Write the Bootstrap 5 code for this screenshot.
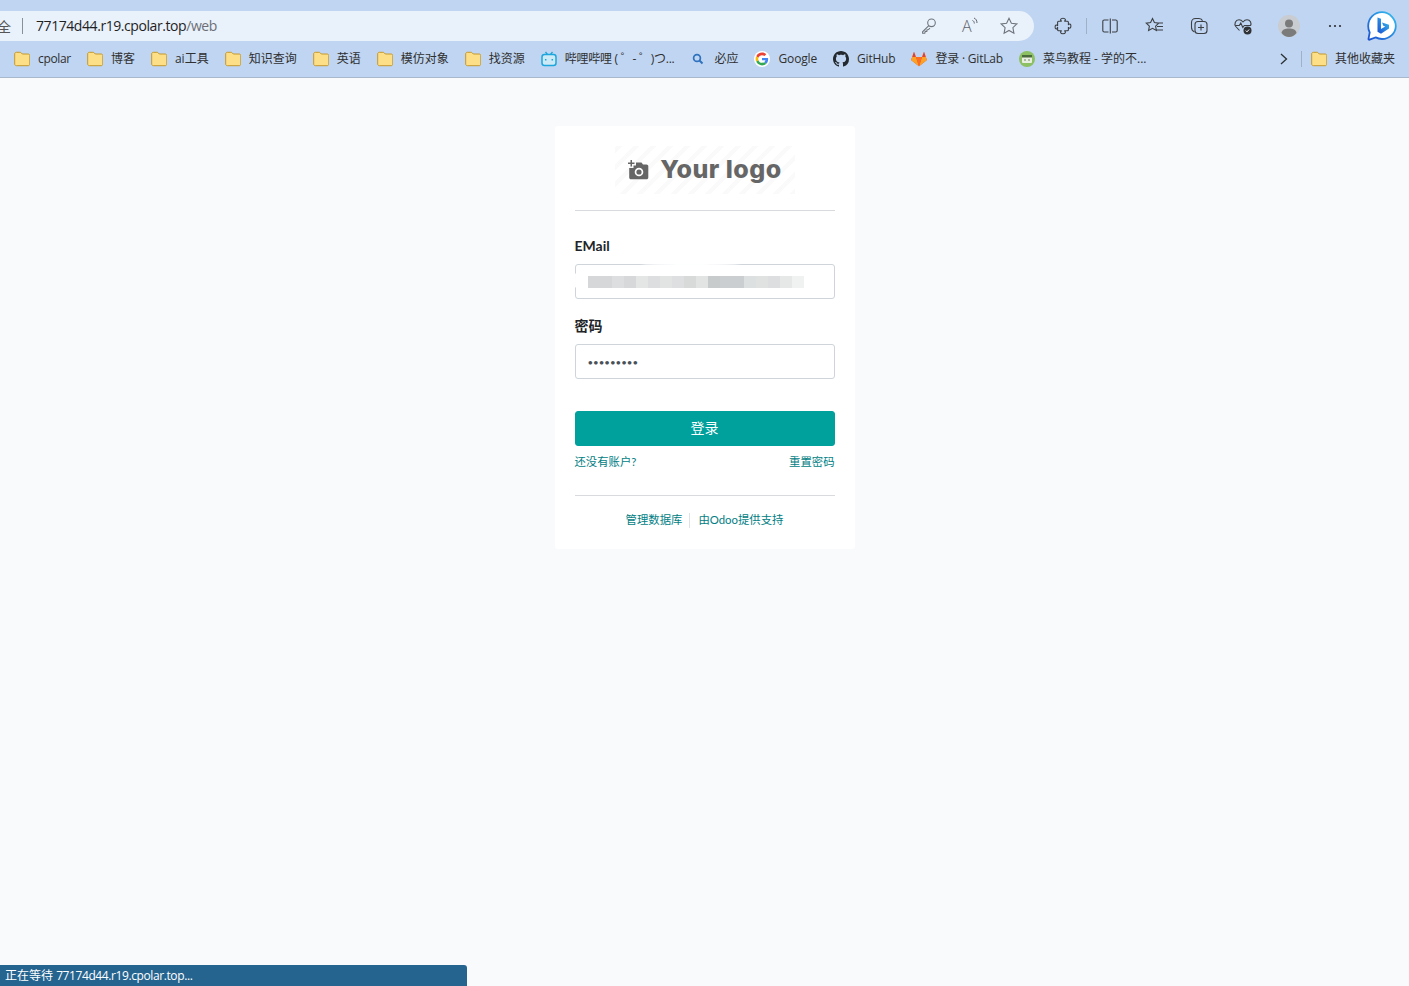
<!DOCTYPE html>
<html lang="zh-CN">

<head>
  <meta charset="UTF-8" />
  <meta name="viewport" content="width=device-width, initial-scale=1" />
  <title>Odoo</title>
  <link href="https://cdn.jsdelivr.net/npm/bootstrap@5.3.0/dist/css/bootstrap.min.css" rel="stylesheet" />
  <style>
    body {
      background: #f9fafb;
      min-height: 100vh;
      font-family: "Lato", "Noto Sans CJK SC", sans-serif;
      font-size: 14px;
      color: #212529;
    }

    .browser-bar {
      background: #bfd5f1;
      height: 78px;
      border-bottom: 1px solid #a9b8cb;
      font-family: "Open Sans", "Noto Sans CJK SC", sans-serif;
      overflow: hidden;
    }

    .tool-row {
      height: 30px;
      margin-top: 11px;
    }

    .address-box {
      width: 1034px;
      background: #e9f1fb;
      border-radius: 0 15px 15px 0;
      overflow: hidden;
      color: #1f1f1f;
      font-size: 14px;
    }

    .secure-text {
      margin-left: -3px;
      width: 14px;
      color: #555;
    }

    .address-sep {
      width: 1px;
      height: 16px;
      background: #8a8f96;
      margin: 0 13px 0 11px;
    }

    .url-path {
      color: #6b6f75;
    }

    .url-text {
      letter-spacing: -0.43px;
      margin-top: -1px;
    }

    .inner-tools {
      margin-right: 15px;
      gap: 20px;
    }

    .icon-slot {
      width: 20px;
      height: 20px;
    }

    .tool-slot {
      width: 45px;
      height: 30px;
    }

    .tool-narrow {
      width: 44px;
    }

    .tool-wide {
      width: 46px;
    }

    .first-tool {
      margin-left: 6px;
    }

    .avatar-tool {
      margin-left: 1px;
    }

    .bing-logo {
      margin-left: 2px;
    }

    .tool-sep {
      width: 1px;
      height: 16px;
      background: #9fb1c7;
      margin-left: 1px;
    }

    .mini-svg {
      fill: none;
      stroke: #3c3f44;
      stroke-width: 1.1;
    }

    .key-svg {
      stroke: #70757c;
    }

    .read-a {
      font-family: "Open Sans", sans-serif;
      font-size: 16px;
      font-weight: 300;
      fill: #60656c;
    }

    .bookmark-row {
      height: 36px;
      padding-left: 14px;
      font-size: 12px;
      color: #303030;
    }

    .bookmark {
      gap: 8px;
      margin-right: 16px;
      white-space: nowrap;
      color: #303030;
      text-decoration: none;
    }

    .bookmark svg {
      width: 16px;
      height: 16px;
      flex: none;
    }

    .tight-1 {
      letter-spacing: -0.33px;
    }

    .tight-2 {
      letter-spacing: -0.2px;
    }

    .tight-3 {
      letter-spacing: -0.25px;
    }

    .tight-4 {
      letter-spacing: -0.15px;
    }

    .bookmark-tail {
      margin-left: auto;
      padding-right: 14px;
    }

    .tail-sep {
      width: 1px;
      height: 16px;
      background: #9fb1c7;
      margin: 0 9px 0 12px;
    }

    .login-card {
      width: 300px;
      margin: 48px auto 0;
      padding: 20px;
      background: #fff;
      border: 0;
      border-radius: 3px;
    }

    .logo-box {
      width: 180px;
      height: 48px;
      margin: 0 auto;
      gap: 11px;
      color: #666;
      background: repeating-linear-gradient(-45deg, #fafafa 0 4px, #fff 4px 12px);
    }

    .logo-text {
      font-family: "Inter", sans-serif;
      font-size: 25px;
      font-weight: 800;
      letter-spacing: 0.5px;
      line-height: 1;
      margin-bottom: 2px;
      white-space: nowrap;
    }

    .logo-rule {
      margin: 16px 0 24px;
      border-top: 1px solid #d8dadd;
      opacity: 1;
    }

    .login-label {
      font-weight: 700;
      margin-bottom: 8px;
      line-height: 21px;
      display: block;
    }

    .login-input {
      height: 35px;
      padding: 6px 12px;
      font-size: 14px;
      line-height: 21px;
      border: 1px solid #ced4da;
      border-radius: 3px;
      color: #495057;
    }

    .password-input {
      font-size: 9.7px;
    }

    .email-wrap {
      margin-bottom: 16px;
    }

    .email-smear {
      position: absolute;
      left: -7px;
      top: 0;
      width: 245px;
      height: 33px;
      background: rgba(255, 255, 255, 0.96);
      border-radius: 45%;
    }

    .email-pixels {
      position: absolute;
      left: 13px;
      top: 12px;
      width: 216px;
      height: 12px;
      background: linear-gradient(90deg,
          #d5d7d8 0 24px, #dcdedf 24px 36px, #d6d8d9 36px 48px, #e4e6e6 48px 60px,
          #dcdedf 60px 72px, #e2e4e4 72px 84px, #dddfe0 84px 96px, #d8dada 96px 108px,
          #e2e4e4 108px 120px, #c8cbcb 120px 132px, #cbced1 132px 156px, #dde0e0 156px 168px,
          #e0e2e2 168px 180px, #dcdedf 180px 192px, #e6e7e7 192px 204px, #f0f2f2 204px 216px);
    }

    .login-submit {
      height: 35px;
      margin-top: 32px;
      padding: 5px 12px 7px;
      font-size: 14px;
      line-height: 21px;
      color: #fff;
      background: #00a09d;
      border: 1px solid #00a09d;
      border-radius: 3px;
    }

    .login-links {
      margin-top: 7px;
      font-size: 11.375px;
      line-height: 18px;
    }

    .teal-link {
      color: #017e84;
      text-decoration: none;
    }

    .foot-rule {
      margin: 24px 0 15px;
      border-top: 1px solid #d8dadd;
      opacity: 1;
    }

    .foot-links {
      font-size: 11.375px;
      line-height: 18px;
    }

    .foot-sep {
      width: 1px;
      height: 15px;
      background: #dee2e6;
      margin: 0 8px 0 7px;
    }

    .status-tip {
      position: fixed;
      left: 0;
      bottom: 0;
      width: 467px;
      height: 21px;
      padding-left: 5px;
      background: #25648f;
      color: #fff;
      font-family: "Open Sans", "Noto Sans CJK SC", sans-serif;
      font-size: 12px;
      line-height: 21px;
      border-top-right-radius: 3px;
    }

    .status-url {
      letter-spacing: -0.4px;
    }
  </style>
</head>

<body>
  <svg width="0" height="0" class="position-absolute">
    <symbol id="folder" viewBox="0 0 16 16">
      <path d="M.7 3c0-1.100.7-1.700 1.600-1.700h3.600c.6 0 1 .2 1.400.6l1 1.100h5.800c1 0 1.700.7 1.700 1.700v8.300c0 1-.7 1.700-1.700 1.700H2.400c-1 0-1.700-.7-1.700-1.700z"
        fill="#fddf88" stroke="#c4982c" stroke-width="1" />
    </symbol>
  </svg>

  <header class="browser-bar">
    <div class="tool-row d-flex align-items-center">
      <div class="address-box h-100 d-flex align-items-center">
        <span class="secure-text">全</span>
        <span class="address-sep"></span>
        <span class="url-text">77174d44.r19.cpolar.top<span class="url-path">/web</span></span>
        <div class="inner-tools ms-auto d-flex align-items-center">
          <svg class="icon-slot mini-svg key-svg" viewBox="0 0 20 20">
            <circle cx="12.500" cy="6.800" r="3.800" />
            <path d="M9.800 9.600 3.600 15.800v1.400h2.200l.4-1.800h1.600l.3-1.700 1.500-.2 1.300-1.500" />
          </svg>
          <svg class="icon-slot" viewBox="0 0 20 20">
            <text x="3" y="16" class="read-a">A</text>
            <path d="M13.500 4.500c1.200.4 1.800 1.500 1.800 3M15 2c1.800.6 3 2.600 3 5" fill="none" stroke="#60656c" stroke-width="1" />
          </svg>
          <svg class="icon-slot mini-svg key-svg" viewBox="0 0 20 20">
            <path d="m10 2.200 2.400 5 5.500.7-4 3.800 1 5.500-4.900-2.700-4.900 2.700 1-5.500-4-3.800 5.500-.7z" />
          </svg>
        </div>
      </div>

      <div class="tool-slot first-tool d-flex align-items-center justify-content-center">
        <svg class="icon-slot mini-svg" viewBox="0 0 20 20">
          <path d="M8.700 5.200C6.800 4.400 7.300 2.200 10 2.200s3.200 2.200 1.300 3h3.100c.6 0 1 .4 1 1v2.900c.8-1.800 2.500-1.400 2.500 1s-1.700 2.800-2.500 1v2.700c0 .6-.4 1-1 1h-3.100c1.900.8 1.400 3-1.300 3s-3.200-2.200-1.300-3H5.600c-.6 0-1-.4-1-1v-2.700C3.800 13.900 2.100 13.500 2.100 11.100s1.700-2.800 2.500-1V6.200c0-.6.4-1 1-1z" />
        </svg>
      </div>
      <span class="tool-sep"></span>
      <div class="tool-slot d-flex align-items-center justify-content-center">
        <svg class="icon-slot mini-svg" viewBox="0 0 20 20">
          <path d="M8.500 4H4.300C3.300 4 2.800 4.600 2.800 5.500v9c0 1 .6 1.500 1.500 1.500h4.200M12 4h3.700c1 0 1.500.6 1.500 1.500v9c0 1-.6 1.500-1.500 1.500H12M10.300 2.500v15" />
        </svg>
      </div>
      <div class="tool-slot d-flex align-items-center justify-content-center">
        <svg class="icon-slot mini-svg" viewBox="0 0 20 20">
          <path d="m7.500 2.500 1.900 4.100 4.300.5-3.100 3 .8 4.400-3.900-2.200-3.900 2.200.8-4.400-3.100-3 4.300-.5zM12.500 7h5.500M12 10.500h6M11.500 14h6.500" />
        </svg>
      </div>
      <div class="tool-slot tool-narrow d-flex align-items-center justify-content-center">
        <svg class="icon-slot mini-svg" viewBox="0 0 20 20">
          <path d="M5.500 16C3.500 15 2.500 13.500 2.500 11.500V6.500c0-2.500 1.600-4 4-4h3.500c1.600 0 3 .8 3.500 2.200" />
          <rect x="6" y="5.500" width="12" height="12" rx="3" />
          <path d="M12 8.500v6M9 11.500h6" />
        </svg>
      </div>
      <div class="tool-slot tool-narrow d-flex align-items-center justify-content-center">
        <svg class="icon-slot" viewBox="0 0 20 20">
          <path d="M6.500 14.500 2.800 10.500C.9 8.200 2.400 3.800 6 3.800c1.700 0 3 1 4 2.200 1-1.200 2.300-2.200 4-2.200 3.300 0 4.800 3.400 3.500 6" class="mini-svg" />
          <path d="M2.500 9.500h3.800l1.500-2.500 2 4.500 1.500-2h6.500" class="mini-svg" />
          <circle cx="14.500" cy="14.500" r="4" fill="#2f3237" />
          <path d="m12.800 14.600 1.200 1.200 2.100-2.300" fill="none" stroke="#fff" stroke-width="1" />
        </svg>
      </div>
      <div class="tool-slot tool-wide avatar-tool d-flex align-items-center justify-content-center">
        <svg width="22" height="22" viewBox="0 0 22 22">
          <circle cx="11" cy="11" r="11" fill="#c9ccd0" />
          <circle cx="11" cy="8.500" r="4" fill="#7b7b7b" />
          <path d="M3.500 18c.6-3.400 3.500-4.500 7.500-4.500s6.900 1.100 7.500 4.500c-2 2.500-4.600 4-7.500 4s-5.500-1.500-7.500-4z" fill="#7b7b7b" />
        </svg>
      </div>
      <div class="tool-slot tool-wide d-flex align-items-center justify-content-center">
        <svg width="14" height="4" viewBox="0 0 14 4">
          <circle cx="2" cy="2" r="1.100" fill="#2c2f33" />
          <circle cx="7" cy="2" r="1.100" fill="#2c2f33" />
          <circle cx="12" cy="2" r="1.100" fill="#2c2f33" />
        </svg>
      </div>
      <div class="tool-slot tool-wide d-flex align-items-center justify-content-center">
        <svg class="bing-logo" width="30" height="30" viewBox="0 0 30 30">
          <defs>
            <linearGradient id="bingFill" x1="0" y1="1" x2="1" y2="0">
              <stop offset="0" stop-color="#1b4fd0" />
              <stop offset="1" stop-color="#35c1f1" />
            </linearGradient>
          </defs>
          <path d="M15 1.200C7.300 1.200 1.200 7.300 1.200 15c0 2.300.5 4.500 1.500 6.400L1.500 27.800c-.1.700.4 1.100 1.100.9l6-2.300c1.900 1 4.100 1.600 6.400 1.600 7.700 0 13.800-6.100 13.800-13S22.700 1.200 15 1.200z"
            fill="#fff" stroke="url(#bingFill)" stroke-width="1.800" />
          <path d="M10.500 6.500l3.500 1.200v10.300l4.300-2.400-2-.9-1.300-3.300 7 2.400v3.700L14 22.800l-3.500-2z" fill="url(#bingFill)" />
        </svg>
      </div>
    </div>

    <nav class="bookmark-row d-flex align-items-center">
      <a class="bookmark d-flex align-items-center"><svg><use href="#folder" /></svg><span class="tight-1">cpolar</span></a>
      <a class="bookmark d-flex align-items-center"><svg><use href="#folder" /></svg><span>博客</span></a>
      <a class="bookmark d-flex align-items-center"><svg><use href="#folder" /></svg><span>ai工具</span></a>
      <a class="bookmark d-flex align-items-center"><svg><use href="#folder" /></svg><span>知识查询</span></a>
      <a class="bookmark d-flex align-items-center"><svg><use href="#folder" /></svg><span>英语</span></a>
      <a class="bookmark d-flex align-items-center"><svg><use href="#folder" /></svg><span>模仿对象</span></a>
      <a class="bookmark d-flex align-items-center"><svg><use href="#folder" /></svg><span>找资源</span></a>
      <a class="bookmark d-flex align-items-center">
        <svg viewBox="0 0 16 16">
          <path d="M4.500 1 6.500 3.500M11.500 1 9.500 3.500" stroke="#1ca6dc" stroke-width="1.300" fill="none" />
          <rect x="1" y="3.500" width="14" height="11" rx="2.500" fill="#cfeaf7" stroke="#1ca6dc" stroke-width="1.500" />
          <path d="M4.700 8v1.500M11.300 8v1.500" stroke="#1ca6dc" stroke-width="1.500" />
        </svg>
        <span class="tight-3">哔哩哔哩 ( ゜- ゜)つ...</span>
      </a>
      <a class="bookmark d-flex align-items-center">
        <svg viewBox="0 0 16 16">
          <circle cx="7" cy="7" r="3.400" fill="none" stroke="#2f72bd" stroke-width="1.700" />
          <path d="m9.500 9.500 3 3" stroke="#2f72bd" stroke-width="1.900" />
        </svg>
        <span>必应</span>
      </a>
      <a class="bookmark d-flex align-items-center">
        <svg viewBox="-6 -6 60 60">
          <circle cx="24" cy="24" r="30" fill="#fff" />
          <path fill="#EA4335" d="M24 9.500c3.540 0 6.710 1.220 9.210 3.600l6.850-6.850C35.900 2.380 30.470 0 24 0 14.620 0 6.510 5.380 2.560 13.220l7.980 6.190C12.430 13.720 17.740 9.500 24 9.500z" />
          <path fill="#4285F4" d="M46.980 24.550c0-1.570-.15-3.090-.38-4.550H24v9.020h12.940c-.58 2.960-2.260 5.480-4.780 7.180l7.730 6c4.510-4.180 7.090-10.360 7.090-17.650z" />
          <path fill="#FBBC05" d="M10.530 28.590c-.48-1.450-.76-2.990-.76-4.590s.27-3.140.76-4.590l-7.980-6.190C.92 16.460 0 20.120 0 24c0 3.880.92 7.540 2.560 10.780l7.970-6.190z" />
          <path fill="#34A853" d="M24 48c6.480 0 11.930-2.130 15.890-5.810l-7.730-6c-2.150 1.450-4.920 2.300-8.160 2.300-6.260 0-11.570-4.220-13.470-9.910l-7.980 6.190C6.510 42.620 14.620 48 24 48z" />
        </svg>
        <span class="tight-4">Google</span>
      </a>
      <a class="bookmark d-flex align-items-center">
        <svg viewBox="0 0 16 16">
          <path fill="#24292f" d="M8 0C3.580 0 0 3.580 0 8c0 3.540 2.290 6.530 5.470 7.590.4.070.55-.17.55-.38 0-.19-.01-.82-.01-1.490-2.010.37-2.530-.49-2.690-.94-.09-.23-.48-.94-.82-1.130-.28-.15-.68-.52-.01-.53.63-.01 1.080.58 1.230.82.72 1.210 1.870.87 2.330.66.070-.52.28-.87.51-1.070-1.780-.2-3.640-.89-3.640-3.950 0-.87.31-1.590.82-2.150-.08-.2-.36-1.020.08-2.120 0 0 .67-.21 2.200.82.64-.18 1.320-.27 2-.27.68 0 1.360.09 2 .27 1.530-1.040 2.200-.82 2.200-.82.44 1.100.16 1.920.08 2.120.51.56.82 1.270.82 2.150 0 3.070-1.870 3.750-3.650 3.950.29.25.54.73.54 1.480 0 1.070-.01 1.930-.01 2.200 0 .21.15.46.55.38A8.013 8.013 0 0016 8c0-4.420-3.580-8-8-8z" />
        </svg>
        <span class="tight-2">GitHub</span>
      </a>
      <a class="bookmark d-flex align-items-center">
        <svg viewBox="0 0 16 16">
          <path fill="#e24329" d="M8 15.200 .7 9.600C.3 9.300.2 8.800.3 8.400L2.700 1.200c.1-.3.5-.3.6 0L5 6h6l1.700-4.800c.1-.3.5-.3.6 0l2.400 7.200c.1.400 0 .9-.4 1.200z" />
          <path fill="#fca326" d="M5 6H1.200L.3 8.400c-.1.400 0 .9.4 1.200L8 15.200zM11 6h3.800l.9 2.400c.1.400 0 .9-.4 1.200L8 15.200z" />
          <path fill="#fc6d26" d="M5 6h6l-3 9.200z" />
        </svg>
        <span class="tight-2">登录 · GitLab</span>
      </a>
      <a class="bookmark d-flex align-items-center">
        <svg viewBox="0 0 16 16">
          <circle cx="8" cy="8" r="8" fill="#8cc063" />
          <rect x="3" y="4" width="10" height="8" rx="1" fill="#e8efe0" />
          <rect x="3" y="4" width="10" height="2.500" fill="#4c6b3d" />
          <path d="m6.500 8-1 1 1 1M9.500 8l1 1-1 1" fill="none" stroke="#4c6b3d" stroke-width=".8" />
        </svg>
        <span>菜鸟教程 - 学的不...</span>
      </a>
      <div class="bookmark-tail d-flex align-items-center">
        <svg width="10" height="14" viewBox="0 0 10 14">
          <path d="m2 2 5.500 5L2 12" fill="none" stroke="#2c2f33" stroke-width="1.300" />
        </svg>
        <span class="tail-sep"></span>
        <a class="bookmark d-flex align-items-center m-0"><svg><use href="#folder" /></svg><span>其他收藏夹</span></a>
      </div>
    </nav>
  </header>

  <main class="card login-card">
    <div class="logo-box d-flex align-items-center justify-content-center">
      <svg width="22" height="20" viewBox="0 0 22 20">
        <path fill="#666" d="M3.500 0h1.500v2.500h2.500V4H5v2.500H3.500V4H1V2.500h2.500z" />
        <path fill="#666" d="M9 2.500h5.500l1.500 2h3.500c1 0 1.800.8 1.800 1.800v11.200c0 1-.8 1.800-1.800 1.800H4c-1 0-1.800-.8-1.800-1.800V8h4.300V5.500H9z" />
        <circle cx="12" cy="12" r="4.300" fill="#fff" />
        <circle cx="12" cy="12" r="2.600" fill="#666" />
      </svg>
      <span class="logo-text">Your logo</span>
    </div>
    <hr class="logo-rule">

    <form>
      <label class="login-label" for="login">EMail</label>
      <div class="email-wrap position-relative">
        <input id="login" type="text" class="form-control login-input">
        <div class="email-smear"></div>
        <div class="email-pixels"></div>
      </div>

      <label class="login-label" for="password">密码</label>
      <input id="password" type="password" class="form-control login-input password-input" value="123456789">

      <button type="button" class="btn login-submit w-100 d-block">登录</button>

      <div class="login-links d-flex justify-content-between">
        <a href="#" class="teal-link">还没有账户?</a>
        <a href="#" class="teal-link">重置密码</a>
      </div>
    </form>

    <hr class="foot-rule">
    <div class="foot-links d-flex align-items-center justify-content-center">
      <a href="#" class="teal-link">管理数据库</a>
      <span class="foot-sep"></span>
      <a href="#" class="teal-link">由Odoo提供支持</a>
    </div>
  </main>

  <div class="status-tip">正在等待 <span class="status-url">77174d44.r19.cpolar.top...</span></div>

  <script src="https://cdn.jsdelivr.net/npm/bootstrap@5.3.0/dist/js/bootstrap.bundle.min.js"></script>
</body>

</html>
